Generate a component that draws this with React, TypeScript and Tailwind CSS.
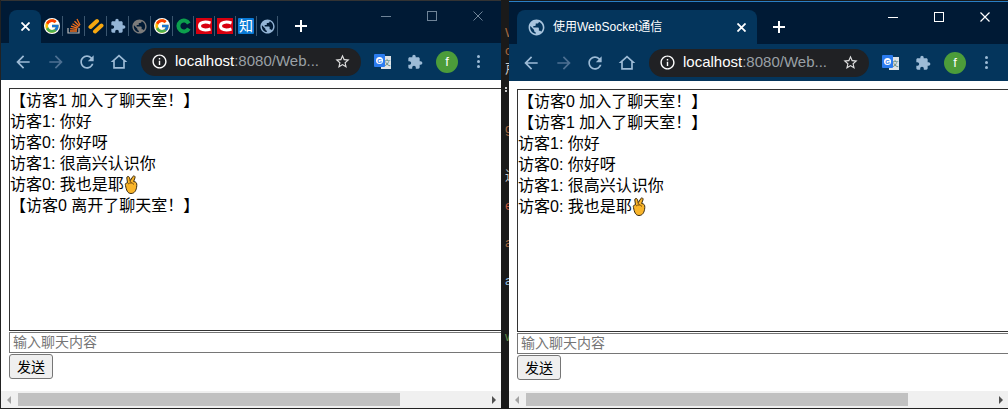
import React from "react";
import { FcGoogle } from "react-icons/fc";

const Hand = () => (
  <svg width="14" height="19" viewBox="0 0 14 19" className="inline-block align-[-4px]">
    <path d="M1.500 10.500C1 9 1.500 8 3 8l.5-.2L2.800 3C2.600 1.300 4.800.8 5.400 2.500l1 3L8.800 1.500c1-1.300 2.800-.3 2.200 1.300L9.600 6.500c2.400.2 3.400 1.500 3.200 4-.3 5-2.300 8-5.800 8-3.500 0-4.700-3.500-5.500-8z" fill="#f9b52a" stroke="#3a2a10" strokeWidth="1" />
    <path d="M4 9c2-1.500 4.500-1.500 6 .500M5.500 5.500 7.500 8" fill="none" stroke="#7a4f10" strokeWidth="1" />
  </svg>
);

const PUZZLE = "M20.500 11H19V7c0-1.100-.9-2-2-2h-4V3.500C13 2.120 11.880 1 10.500 1S8 2.120 8 3.500V5H4c-1.100 0-1.990.9-1.990 2v3.800H3.500c1.490 0 2.700 1.210 2.700 2.700s-1.210 2.700-2.700 2.700H2V20c0 1.100.9 2 2 2h3.800v-1.500c0-1.490 1.210-2.700 2.700-2.700 1.490 0 2.700 1.210 2.700 2.700V22H17c1.100 0 2-.9 2-2v-4h1.500c1.380 0 2.500-1.120 2.500-2.500S21.880 11 20.500 11z";
const PUBLIC = "M12 2C6.480 2 2 6.480 2 12s4.480 10 10 10 10-4.480 10-10S17.520 2 12 2zm-1 17.930c-3.950-.49-7-3.850-7-7.930 0-.62.08-1.210.21-1.790L9 15v1c0 1.100.9 2 2 2v1.930zm6.900-2.540c-.26-.81-1-1.390-1.900-1.390h-1v-3c0-.55-.45-1-1-1H8v-2h2c.55 0 1-.45 1-1V7h2c1.100 0 2-.9 2-2v-.41c2.930 1.190 5 4.060 5 7.410 0 2.080-.8 3.970-2.100 5.390z";
const BACK = "M20 11H7.830l5.590-5.590L12 4l-8 8 8 8 1.410-1.410L7.830 13H20v-2z";
const FORWARD = "M12 4l-1.410 1.410L16.170 11H4v2h12.170l-5.580 5.590L12 20l8-8z";
const RELOAD = "M17.650 6.350C16.200 4.900 14.210 4 12 4c-4.420 0-7.990 3.580-7.990 8s3.570 8 7.990 8c3.730 0 6.840-2.550 7.730-6h-2.080c-.82 2.330-3.040 4-5.650 4-3.310 0-6-2.690-6-6s2.690-6 6-6c1.660 0 3.140.69 4.220 1.780L13 11h7V4l-2.350 2.350z";
const HOME = "M12 5.690l5 4.500V18H7v-7.810zM12 3L2 12h3v8h14v-8h3z";
const STAR = "M22 9.240l-7.190-.62L12 2 9.190 8.630 2 9.240l5.460 4.730L5.820 21 12 17.270 18.180 21l-1.630-7.030L22 9.240zM12 15.400l-3.760 2.270 1-4.280-3.320-2.880 4.380-.38L12 6.100l1.710 4.040 4.380.38-3.320 2.880 1 4.280L12 15.400z";
const INFO = "M11 7h2v2h-2zm0 4h2v6h-2zm1-9C6.480 2 2 6.480 2 12s4.480 10 10 10 10-4.480 10-10S17.520 2 12 2zm0 18c-4.410 0-8-3.590-8-8s3.590-8 8-8 8 3.590 8 8-3.590 8-8 8z";

const Mi = ({ d, size, color, className = "" }: { d: string; size: number; color: string; className?: string }) => (
  <svg width={size} height={size} viewBox="0 0 24 24" className={`shrink-0 ${className}`} fill={color} fillRule="evenodd">
    <path d={d} />
  </svg>
);

const Sep = () => <span className="h-[20px] w-px shrink-0 bg-[#3b566f]" />;

const CloseX = ({ color, size, w }: { color: string; size: number; w: number }) => (
  <svg width={size} height={size} viewBox="0 0 10 10" className="shrink-0" stroke={color} strokeWidth={w}>
    <path d="M.5.500l9 9M9.500.500l-9 9" />
  </svg>
);

const PlusIcon = () => (
  <svg width="12" height="12" viewBox="0 0 12 12" className="shrink-0" stroke="#fff" strokeWidth="2">
    <path d="M6 0v12M0 6h12" />
  </svg>
);

const RedC = () => (
  <svg width="16" height="16" viewBox="0 0 16 16" fill="none" className="bg-[#d8000f]">
    <path d="M14.500 5C8.500 3 3.500 4.500 3.500 8s5 5 11 3" stroke="#fff" strokeWidth="3" />
  </svg>
);

const PinnedTabs = () => {
  const icons: [React.ReactNode, string][] = [
    [<FcGoogle size={16} className="rounded-full bg-white" />, "w-[20px]"],
    [
      <svg width="16" height="16" viewBox="0 0 16 16" fill="none">
        <path d="M2 10v5h11v-5" stroke="#bcbbbb" strokeWidth="1.200" />
        <path d="M4 13h7M4.200 10.600l6.800.8M5 8.200l6.500 2M6.500 5.800l6 3.500M8.500 3.300l5 5M11 1l3 6" stroke="#f4701c" strokeWidth="1.300" />
      </svg>,
      "w-[21px]",
    ],
    [
      <svg width="16" height="16" viewBox="0 0 16 16" fill="none" stroke="#f7a70f" strokeWidth="4" strokeLinecap="round">
        <path d="M2.500 9 9 3" />
        <path d="M7 13.500 13.500 7.500" />
      </svg>,
      "w-[21px]",
    ],
    [<Mi d={PUZZLE} size={16} color="#94b5d6" />, "w-[21px]"],
    [<Mi d={PUBLIC} size={17} color="#7b7b7b" />, "w-[21px]"],
    [<FcGoogle size={16} className="rounded-full bg-white" />, "w-[21px]"],
    [
      <svg width="16" height="16" viewBox="0 0 16 16" fill="none">
        <path d="M13.800 5.500A5.500 5.500 0 1 0 13.800 10.500" stroke="#0ca04d" strokeWidth="4" />
      </svg>,
      "w-[20px]",
    ],
    [<RedC />, "w-[20px]"],
    [<RedC />, "w-[20px]"],
    [
      <span className="flex h-[16px] w-[16px] items-center justify-center rounded-[1px] bg-[#0a7ad6] text-[14px] leading-none text-white">知</span>,
      "w-[20px]",
    ],
    [<Mi d={PUBLIC} size={17} color="#94b5d6" />, "w-[20px]"],
  ];
  return (
    <div className="mb-[7px] ml-[1px] flex h-[20px] items-center">
      {icons.map(([ic, w], i) => (
        <React.Fragment key={i}>
          <span className={`flex h-[20px] shrink-0 items-center justify-center ${w}`}>{ic}</span>
          <Sep />
        </React.Fragment>
      ))}
    </div>
  );
};

const Toolbar = () => (
  <div className="flex h-[37px] shrink-0 items-center bg-[#04355c] pl-[12px]">
    <Mi d={BACK} size={20} color="#9dbbd6" />
    <Mi d={FORWARD} size={20} color="#4d7092" className="ml-[13px]" />
    <Mi d={RELOAD} size={20} color="#9dbbd6" className="ml-[11px]" />
    <Mi d={HOME} size={20} color="#9dbbd6" className="ml-[12px]" />
    <div className="ml-[12px] flex h-[28px] w-[220px] shrink-0 items-center rounded-full bg-[#202124] pl-[10px] pr-[10px]">
      <Mi d={INFO} size={17} color="#ffffff" />
      <span className="ml-[7px] whitespace-nowrap text-[15px] text-white">
        localhost<span className="text-[#9aa0a6]">:8080/Web...</span>
      </span>
      <Mi d={STAR} size={17} color="#e0e0e0" className="ml-auto" />
    </div>
    <div className="relative ml-[13px] h-[15px] w-[17px] shrink-0">
      <span className="absolute left-[7px] top-[2px] flex h-[13px] w-[10px] items-center justify-center bg-[#dfe3e6] pl-[2px] text-[7px] leading-none text-[#4f7f72]">文</span>
      <span className="absolute left-0 top-0 flex h-[13px] w-[11px] items-center justify-center rounded-[1px] bg-[#2b7cf0]">
        <span className="flex h-[7px] w-[7px] items-center justify-center rounded-full bg-white text-[6px] font-bold leading-none text-[#2b7cf0]">G</span>
      </span>
    </div>
    <Mi d={PUZZLE} size={16} color="#9dbbd6" className="ml-[16px]" />
    <span className="ml-[13px] flex h-[22px] w-[22px] shrink-0 items-center justify-center rounded-full bg-[#4c9c3a] text-[13px] leading-none text-white">f</span>
    <span className="ml-[19px] flex shrink-0 flex-col gap-[2px]">
      <span className="h-[3px] w-[3px] rounded-full bg-[#9dbbd6]" />
      <span className="h-[3px] w-[3px] rounded-full bg-[#9dbbd6]" />
      <span className="h-[3px] w-[3px] rounded-full bg-[#9dbbd6]" />
    </span>
  </div>
);

const Content = ({ lines }: { lines: React.ReactNode[] }) => (
  <div className="flex min-h-0 flex-1 flex-col overflow-hidden bg-white">
    <div className="flex-1 overflow-hidden pl-[8px] pt-[8px]">
      <div className="h-[243px] w-[600px] border border-[#333] pt-[1px] text-[16px] leading-[21px] text-black">
        {lines.map((l, i) => (
          <div key={i} className="whitespace-pre">{l}</div>
        ))}
      </div>
      <input
        readOnly
        placeholder="输入聊天内容"
        className="mt-[1px] block h-[21px] w-[600px] border border-[#767676] px-[3px] text-[14px] outline-none placeholder:text-[#757575]"
      />
      <button className="mt-[1px] block h-[25px] w-[44px] rounded-[3px] border border-[#767676] bg-[#efefef] text-[14px] leading-none text-black">发送</button>
    </div>
    <div className="flex h-[17px] shrink-0 items-center bg-[#f0f0f0]">
      <span className="ml-[6px] h-0 w-0 border-y-[4px] border-r-[4px] border-y-transparent border-r-[#a3a3a3]" />
      <span className="ml-[7px] h-[13px] w-[382px] bg-[#c1c1c1]" />
      <span className="ml-auto mr-[5px] h-0 w-0 border-y-[4px] border-l-[4px] border-y-transparent border-l-[#505050]" />
    </div>
    <div className="h-[1px] shrink-0 bg-[#222]" />
  </div>
);

const linesL = [
  "【访客1 加入了聊天室！】",
  "访客1: 你好",
  "访客0: 你好呀",
  "访客1: 很高兴认识你",
  <>访客0: 我也是耶<Hand /></>,
  "【访客0 离开了聊天室！】",
];
const linesR = [
  "【访客0 加入了聊天室！】",
  "【访客1 加入了聊天室！】",
  "访客1: 你好",
  "访客0: 你好呀",
  "访客1: 很高兴认识你",
  <>访客0: 我也是耶<Hand /></>,
];

const stripBits: [number, string, string][] = [
  [26, "W", "#a5673f"],
  [44, "cl", "#a5673f"],
  [62, "戸", "#cccccc"],
  [122, "g", "#a5673f"],
  [169, "通", "#cccccc"],
  [199, "e", "#c0563c"],
  [236, "a", "#a5673f"],
  [274, "a", "#9cc4e4"],
  [330, "w", "#5f8f4a"],
];

const Controls = ({ color, w, mb }: { color: string; w: number; mb: string }) => (
  <div className={`ml-auto flex shrink-0 items-center pr-[18px] ${mb}`}>
    <span className="h-px w-[10px] shrink-0" style={{ background: color }} />
    <span className="ml-[36px] h-[10px] w-[10px] shrink-0 border" style={{ borderColor: color }} />
    <span className="ml-[36px]"><CloseX color={color} size={10} w={w} /></span>
  </div>
);

export default function App() {
  return (
    <div className="flex h-[409px] w-[1008px] overflow-hidden bg-[#1a1a1a] font-['Liberation_Sans','Noto_Sans_CJK_SC',sans-serif]">
      {/* left window */}
      <div className="flex h-[409px] w-[501px] shrink-0 flex-col overflow-hidden border-l border-[#222]">
        <div className="flex h-[43px] shrink-0 items-end border-t border-[#333] bg-[#001a35]">
          <div className="ml-[8px] flex h-[33px] w-[32px] shrink-0 items-center justify-center rounded-t-[8px] bg-[#04355c]">
            <CloseX color="#fff" size={9} w={2} />
          </div>
          <PinnedTabs />
          <span className="mb-[11px] ml-[17px]"><PlusIcon /></span>
          <Controls color="#6f8498" w={1} mb="mb-[22px]" />
        </div>
        <Toolbar />
        <Content lines={linesL} />
      </div>

      {/* code editor peeking between the windows */}
      <div className="relative h-[409px] w-[8px] shrink-0 overflow-hidden text-[13px] leading-none">
        {stripBits.map(([t, s, c], i) => (
          <span key={i} className="absolute left-[4px] whitespace-nowrap" style={{ top: t, color: c }}>{s}</span>
        ))}
        <span className="absolute left-[4px] top-[87px] flex flex-col gap-[1px]">
          <span className="h-[2px] w-[2px] bg-[#ccc]" />
          <span className="h-[2px] w-[2px] bg-[#ccc]" />
        </span>
      </div>

      {/* right window */}
      <div className="flex h-[409px] min-w-0 flex-1 flex-col overflow-hidden">
        <div className="h-[2px] shrink-0 border-b border-[#2a7fc4] bg-[#1a1a1a]" />
        <div className="flex h-[42px] shrink-0 items-end bg-[#001a35]">
          <div className="ml-[8px] flex h-[34px] w-[240px] shrink-0 items-center rounded-t-[8px] bg-[#04355c] pl-[12px] pr-[11px]">
            <Mi d={PUBLIC} size={19} color="#a9c5de" className="-ml-[2px]" />
            <span className="ml-[7px] whitespace-nowrap text-[12px] text-white">使用WebSocket通信</span>
            <span className="ml-auto"><CloseX color="#fff" size={9} w={2} /></span>
          </div>
          <span className="mb-[11px] ml-[16px]"><PlusIcon /></span>
          <Controls color="#ffffff" w={1.200} mb="mb-[22px]" />
        </div>
        <Toolbar />
        <Content lines={linesR} />
      </div>
    </div>
  );
}
